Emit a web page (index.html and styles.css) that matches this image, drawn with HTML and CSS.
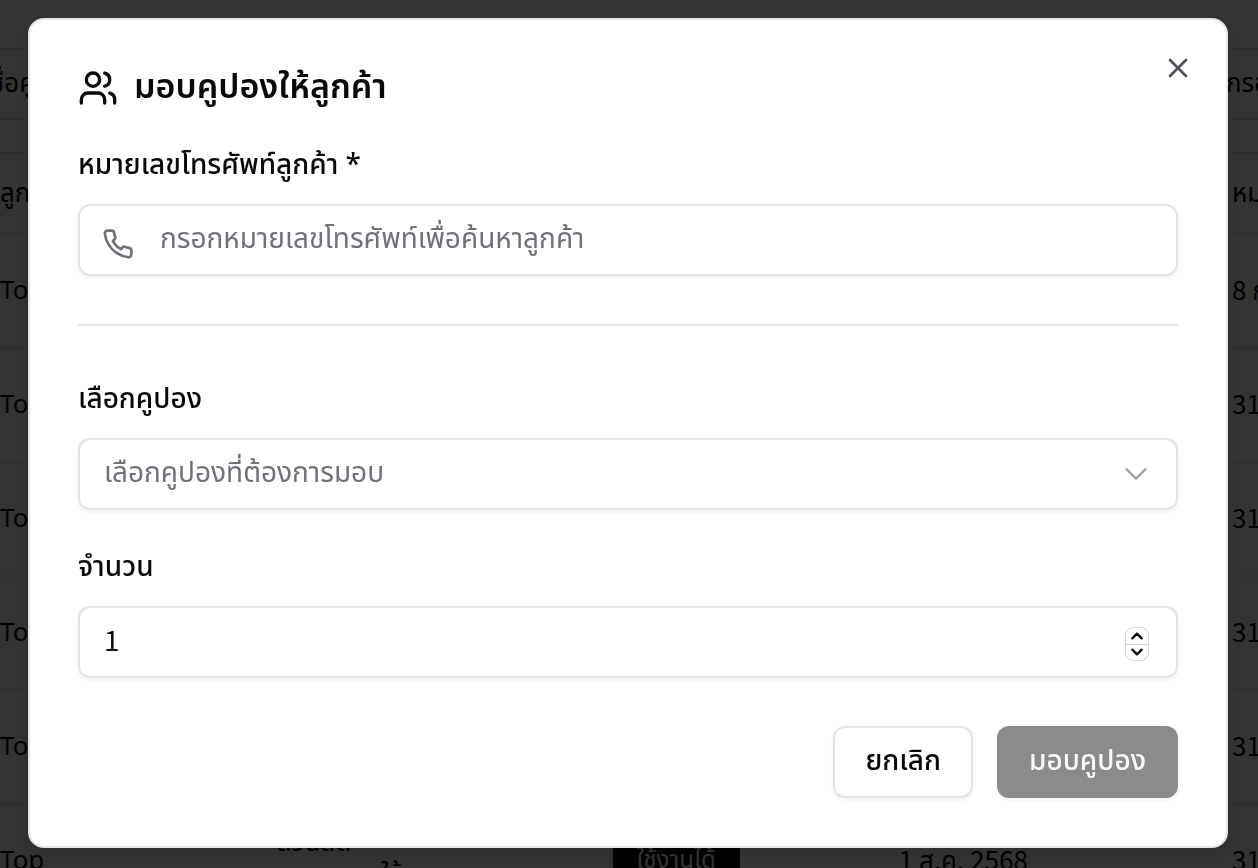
FILE: index.html
```html
<!DOCTYPE html>
<html lang="th">
<head>
<meta charset="utf-8">
<meta name="viewport" content="width=device-width, initial-scale=1">
<title>มอบคูปองให้ลูกค้า</title>
<link rel="stylesheet" href="styles.css">
</head>
<body>
<div class="page" inert>
  <div class="toolbar"><span class="search">ชื่อคูปอง</span><span class="filter">กรอง</span></div>
  <table class="coupons">
    <thead><tr><th class="name">ลูกค้า</th><th class="coupon"></th><th class="status"></th><th class="start"></th><th class="end">หมดอายุ</th></tr></thead>
    <tbody>
      <tr><td>Top</td><td></td><td></td><td></td><td class="date">8 ก.ย.</td></tr>
      <tr><td>Top</td><td></td><td></td><td></td><td class="date">31 ส.ค.</td></tr>
      <tr><td>Top</td><td></td><td></td><td></td><td class="date">31 ส.ค.</td></tr>
      <tr><td>Top</td><td></td><td></td><td></td><td class="date">31 ส.ค.</td></tr>
      <tr><td>Top</td><td></td><td></td><td></td><td class="date">31 ส.ค.</td></tr>
      <tr><td>Top</td><td class="two-line">ส่วนลด<br><span class="detail">ใช้</span></td><td><span class="badge">ใช้งานได้</span></td><td class="date">1 ส.ค. 2568</td><td class="date">31 ส.ค.</td></tr>
    </tbody>
  </table>
</div>
<div class="overlay">
  <form class="dialog" role="dialog" aria-modal="true" aria-labelledby="dialog-title">
    <header class="dialog-header">
      <svg class="icon-users" viewBox="0 0 24 24" aria-hidden="true"><path d="M16 21v-2a4 4 0 0 0-4-4H6a4 4 0 0 0-4 4v2"/><circle cx="9" cy="7" r="4"/><path d="M22 21v-2a4 4 0 0 0-3-3.87"/><path d="M16 3.13a4 4 0 0 1 0 7.75"/></svg>
      <h2 id="dialog-title">มอบคูปองให้ลูกค้า</h2>
      <button class="close" type="button" aria-label="ปิด"><svg viewBox="0 0 24 24" aria-hidden="true"><path d="M18 6 6 18M6 6l12 12"/></svg></button>
    </header>
    <div class="field">
      <label for="phone">หมายเลขโทรศัพท์ลูกค้า *</label>
      <div class="control with-icon">
        <svg class="icon-phone" viewBox="0 0 24 24" aria-hidden="true"><path d="M22 16.92v3a2 2 0 0 1-2.18 2 19.79 19.79 0 0 1-8.63-3.07 19.5 19.5 0 0 1-6-6 19.79 19.79 0 0 1-3.07-8.67A2 2 0 0 1 4.11 2h3a2 2 0 0 1 2 1.72 12.84 12.84 0 0 0 .7 2.81 2 2 0 0 1-.45 2.11L8.09 9.91a16 16 0 0 0 6 6l1.27-1.27a2 2 0 0 1 2.11-.45 12.84 12.84 0 0 0 2.81.7A2 2 0 0 1 22 16.92z"/></svg>
        <input id="phone" type="tel" placeholder="กรอกหมายเลขโทรศัพท์เพื่อค้นหาลูกค้า">
      </div>
    </div>
    <hr>
    <div class="field">
      <label for="coupon">เลือกคูปอง</label>
      <div class="control">
        <select id="coupon"><option>เลือกคูปองที่ต้องการมอบ</option></select>
        <svg class="icon-chevron" viewBox="0 0 24 24" aria-hidden="true"><path d="m4 8 8 8 8-8"/></svg>
      </div>
    </div>
    <div class="field quantity">
      <label for="quantity">จำนวน</label>
      <div class="control">
        <input id="quantity" type="number" value="1" min="1">
        <span class="stepper">
          <button type="button" aria-label="เพิ่ม"><svg viewBox="0 0 12 8" aria-hidden="true"><path d="m2 6 4-4 4 4"/></svg></button>
          <button type="button" aria-label="ลด"><svg viewBox="0 0 12 8" aria-hidden="true"><path d="m2 2 4 4 4-4"/></svg></button>
        </span>
      </div>
    </div>
    <footer class="actions">
      <button class="button" type="button">ยกเลิก</button>
      <button class="button primary" type="submit" disabled>มอบคูปอง</button>
    </footer>
  </form>
</div>
</body>
</html>
```
FILE: styles.css
```css
* { box-sizing: border-box; }
body {
  margin: 0;
  height: 100vh;
  overflow: hidden;
  color: #09090b;
  background: #fff;
  font: 400 28px/32px "Noto Sans", "Noto Sans Thai", sans-serif;
}
input, select, button { font: inherit; color: inherit; }
svg { fill: none; stroke: currentColor; stroke-width: 2; stroke-linecap: round; stroke-linejoin: round; flex: none; }

.page { height: 100%; padding-top: 48px; overflow: hidden; font-size: 26px; }
.toolbar {
  display: flex;
  justify-content: space-between;
  align-items: center;
  height: 72px;
  margin-bottom: 32px;
  padding-bottom: 4px;
  border: solid #e4e4e7;
  border-width: 2px 0;
}
.toolbar .search { margin-left: -10px; }
.toolbar .filter { width: 32px; white-space: nowrap; }
.coupons { width: 100%; table-layout: fixed; border-collapse: collapse; border-top: 2px solid #e4e4e7; white-space: nowrap; }
.coupons th { height: 81px; padding: 0 0 4px; font-weight: 400; text-align: left; }
.coupons td { height: 114px; padding: 0 0 4px; }
.coupons tr { border-bottom: 2px solid #e4e4e7; }
.coupons .name { width: 22%; }
.coupons .coupon { width: 336px; }
.coupons .status { width: 286px; }
.coupons .end { width: 26px; }
.coupons .date, #quantity { font-family: "Noto Sans CJK JP", "Noto Sans Thai", sans-serif; }
.coupons .two-line { padding-bottom: 8px; }
.detail { padding-left: 104px; }
.badge { display: inline-block; padding: 4px 24px; color: #fafafa; background: #09090b; font-size: 24px; }

.overlay {
  position: fixed;
  inset: 0;
  display: flex;
  align-items: center;
  padding: 18px 30px 20px 28px;
  background: rgb(0 0 0 / 80%);
}
.dialog {
  width: 100%;
  padding: 48px;
  border: 2px solid #e4e4e7;
  border-radius: 16px;
  background: #fff;
  box-shadow: 0 8px 16px rgb(0 0 0 / 10%);
}
.dialog-header { position: relative; display: flex; align-items: center; gap: 16px; height: 36px; margin-bottom: 44px; }
.icon-users { width: 40px; height: 40px; margin-top: 4px; }
h2 { margin: 0; padding-bottom: 2px; font-size: 34px; line-height: 36px; font-weight: 600; }
.close { position: absolute; top: -16px; right: -16px; display: flex; padding: 0; border: 0; background: none; color: #52525b; }
.close svg { width: 32px; height: 32px; }
.field { display: flex; flex-direction: column; gap: 24px; }
label { padding-bottom: 2px; line-height: 30px; font-weight: 500; }
.control {
  display: flex;
  align-items: center;
  gap: 24px;
  height: 72px;
  padding: 0 24px;
  border: 2px solid #e4e4e7;
  border-radius: 12px;
  box-shadow: 0 2px 4px rgb(0 0 0 / 6%);
}
.with-icon { gap: 26px; padding-left: 22px; }
.control input, .control select {
  flex: 1;
  min-width: 0;
  height: 100%;
  padding: 0 0 6px;
  border: 0;
  outline: 0;
  background: none;
  appearance: none;
}
.control select { line-height: 48px; }
.control select, .control input::placeholder { color: #71717a; opacity: 1; }
.icon-phone { width: 32px; height: 32px; margin-top: 8px; color: #71717a; }
.icon-chevron { width: 28px; height: 28px; margin-right: 2px; color: #a1a1aa; }
hr { width: 100%; height: 2px; margin: 48px 0 56px; border: 0; background: #e4e4e7; }
.quantity { margin-top: 40px; }
#quantity { appearance: textfield; }
#quantity::-webkit-inner-spin-button { appearance: none; }
.stepper { display: flex; flex-direction: column; width: 24px; height: 34px; margin: 4px 3px 0 0; border: 1px solid #d4d4d8; border-radius: 8px; }
.stepper button { display: flex; flex: 1; align-items: center; justify-content: center; padding: 0; border: 0; background: none; }
.stepper button + button { border-top: 1px solid #d4d4d8; }
.stepper svg { width: 14px; height: 10px; }
.actions { display: flex; justify-content: flex-end; gap: 24px; margin-top: 48px; }
.button { height: 72px; padding: 0 30px 6px; border: 2px solid #e4e4e7; border-radius: 12px; background: #fff; font-weight: 500; box-shadow: 0 2px 4px rgb(0 0 0 / 6%); }
.primary { color: #fafafa; background: #8b8b8d; border-color: #8b8b8d; }
```
